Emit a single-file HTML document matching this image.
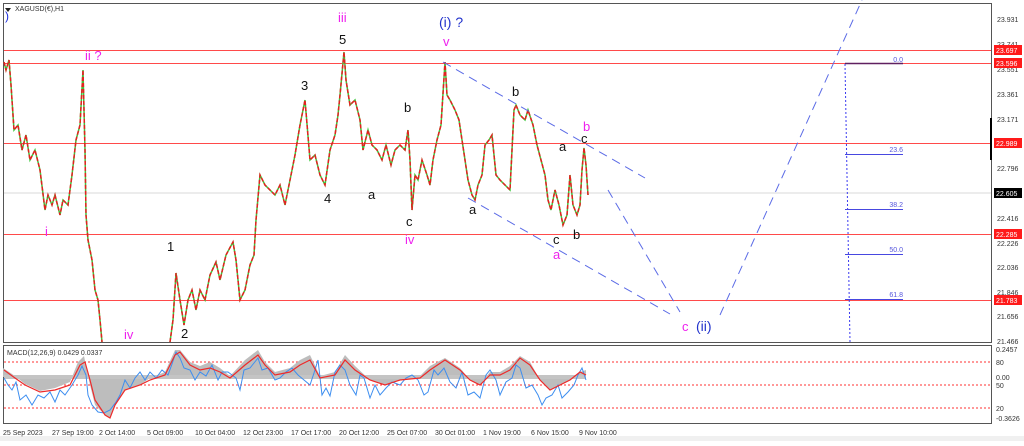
<!DOCTYPE html>
<html><head><meta charset="utf-8"><style>
html,body{margin:0;padding:0;background:#fff;}
body{width:1024px;height:441px;overflow:hidden;font-family:"Liberation Sans",sans-serif;}
</style></head><body>
<svg width="1024" height="441" viewBox="0 0 1024 441" xmlns="http://www.w3.org/2000/svg" font-family="Liberation Sans, sans-serif">
<rect x="0" y="0" width="1024" height="441" fill="#fff"/>
<rect x="0" y="436" width="1024" height="5" fill="#f0f0f0"/>
<rect x="3.5" y="3.5" width="988" height="339" fill="#fff" stroke="#555" stroke-width="1"/>
<rect x="3.5" y="345.5" width="988" height="78" fill="#fff" stroke="#555" stroke-width="1"/>
<path d="M5 8 L11 8 L8 12 Z" fill="#222"/>
<text x="15" y="11" font-size="7" fill="#333">XAGUSD(€),H1</text>
<text x="5" y="20" font-size="12" fill="#1a2bdc">)</text>
<line x1="4" y1="193" x2="991" y2="193" stroke="#d8d8d8" stroke-width="1"/>
<g stroke="#ff4a4a" stroke-width="1">
<line x1="4" y1="50.5" x2="991" y2="50.5"/>
<line x1="4" y1="63.5" x2="991" y2="63.5"/>
<line x1="4" y1="143.5" x2="991" y2="143.5"/>
<line x1="4" y1="234.5" x2="991" y2="234.5"/>
<line x1="4" y1="300.5" x2="991" y2="300.5"/>
</g>
<g id="px" fill="none" stroke-width="1.5">
<polyline stroke="#3cc83c" points="4,62 6,70 9,60 11,85 14,130 18,125 22,150 26,135 30,160 35,150 40,170 45,210 48,195 52,205 55,195 60,215 63,200 68,205 72,175 76,140 80,125 83,70 85,150 86,215 88,240 92,260 95,290 98,300 100,320 102,342"/>
<polyline stroke="#3cc83c" points="170,342 173,320 176,273 180,300 184,325 188,300 192,290 196,310 200,290 205,300 210,275 216,262 220,280 226,255 233,242 236,260 240,300 245,290 250,265 254,255 256,220 260,175 265,185 270,190 275,195 280,185 285,205 290,180 295,155 300,125 305,100 310,160 315,155 320,175 325,185 330,150 335,135 338,115 340,95 344,52 346,80 350,105 355,100 360,120 363,150 368,130 372,145 377,150 382,160 386,145 391,165 395,150 400,145 405,150 408,130 410,160 412,210 415,175 418,180 422,160 427,175 430,185 433,160 437,140 441,125 445,62 447,95 450,100 455,110 459,120 462,140 465,160 468,180 472,195 475,200 478,185 482,175 485,145 489,140 492,135 496,175 500,180 505,185 510,190 514,110 516,105 520,115 525,120 528,110 533,125 537,145 541,160 545,175 548,200 551,210 555,190 559,205 563,225 567,215 570,175 573,205 577,215 580,205 582,170 584,148 586,165 588,195"/>
</g>
<g fill="none" stroke="#e52020" stroke-width="1.5" stroke-dasharray="4,2">
<polyline points="4,62 6,70 9,60 11,85 14,130 18,125 22,150 26,135 30,160 35,150 40,170 45,210 48,195 52,205 55,195 60,215 63,200 68,205 72,175 76,140 80,125 83,70 85,150 86,215 88,240 92,260 95,290 98,300 100,320 102,342"/>
<polyline points="170,342 173,320 176,273 180,300 184,325 188,300 192,290 196,310 200,290 205,300 210,275 216,262 220,280 226,255 233,242 236,260 240,300 245,290 250,265 254,255 256,220 260,175 265,185 270,190 275,195 280,185 285,205 290,180 295,155 300,125 305,100 310,160 315,155 320,175 325,185 330,150 335,135 338,115 340,95 344,52 346,80 350,105 355,100 360,120 363,150 368,130 372,145 377,150 382,160 386,145 391,165 395,150 400,145 405,150 408,130 410,160 412,210 415,175 418,180 422,160 427,175 430,185 433,160 437,140 441,125 445,62 447,95 450,100 455,110 459,120 462,140 465,160 468,180 472,195 475,200 478,185 482,175 485,145 489,140 492,135 496,175 500,180 505,185 510,190 514,110 516,105 520,115 525,120 528,110 533,125 537,145 541,160 545,175 548,200 551,210 555,190 559,205 563,225 567,215 570,175 573,205 577,215 580,205 582,170 584,148 586,165 588,195"/>
</g>
<g stroke="#5b6be6" stroke-width="1" stroke-dasharray="9,6" fill="none">
<line x1="443" y1="62" x2="645" y2="178"/>
<line x1="468" y1="198" x2="670" y2="314"/>
<line x1="608" y1="190" x2="680" y2="312"/>
<line x1="720" y1="315" x2="862" y2="0"/>
</g>
<line x1="845" y1="64" x2="850" y2="342" stroke="#3a3af0" stroke-width="1" stroke-dasharray="2,2"/>
<line x1="845" y1="63.5" x2="903" y2="63.5" stroke="#602060" stroke-width="1.5"/>
<g stroke="#4848e0" stroke-width="1">
<line x1="845" y1="154.5" x2="903" y2="154.5"/>
<line x1="845" y1="209.5" x2="903" y2="209.5"/>
<line x1="845" y1="254.5" x2="903" y2="254.5"/>
<line x1="845" y1="299.5" x2="903" y2="299.5"/>
</g>
<g font-size="7" fill="#5555dd" text-anchor="end">
<text x="903" y="62">0.0</text>
<text x="903" y="152">23.6</text>
<text x="903" y="207">38.2</text>
<text x="903" y="252">50.0</text>
<text x="903" y="297">61.8</text>
</g>
<g font-size="13" fill="#ee22ee">
<text x="338" y="22">iii</text>
<text x="443" y="46">v</text>
<text x="85" y="60">ii ?</text>
<text x="583" y="131">b</text>
<text x="45" y="236">i</text>
<text x="405" y="244">iv</text>
<text x="553" y="259">a</text>
<text x="124" y="339">iv</text>
<text x="682" y="331">c</text>
</g>
<g font-size="14" fill="#2233cc">
<text x="439" y="27">(i) ?</text>
<text x="696" y="331">(ii)</text>
</g>
<g font-size="13" fill="#111">
<text x="339" y="44">5</text>
<text x="301" y="90">3</text>
<text x="404" y="112">b</text>
<text x="512" y="96">b</text>
<text x="581" y="143">c</text>
<text x="559" y="151">a</text>
<text x="368" y="199">a</text>
<text x="324" y="203">4</text>
<text x="469" y="214">a</text>
<text x="406" y="226">c</text>
<text x="553" y="244">c</text>
<text x="573" y="239">b</text>
<text x="167" y="251">1</text>
<text x="181" y="338">2</text>
</g>
<rect x="990" y="118" width="2" height="42" fill="#000"/>
<g font-size="7" fill="#333">
<text x="997" y="22">23.931</text>
<text x="997" y="47">23.741</text>
<text x="997" y="72">23.551</text>
<text x="997" y="97">23.361</text>
<text x="997" y="122">23.171</text>
<text x="997" y="171">22.796</text>
<text x="997" y="221">22.416</text>
<text x="997" y="246">22.226</text>
<text x="997" y="270">22.036</text>
<text x="997" y="295">21.846</text>
<text x="997" y="319">21.656</text>
<text x="997" y="344">21.466</text>
</g>
<g>
<rect x="994" y="45" width="28" height="10" fill="#ff1a1a"/>
<rect x="994" y="58" width="28" height="10" fill="#ff1a1a"/>
<rect x="994" y="138" width="28" height="10" fill="#ff1a1a"/>
<rect x="994" y="188" width="28" height="10" fill="#000"/>
<rect x="994" y="229" width="28" height="10" fill="#ff1a1a"/>
<rect x="994" y="295" width="28" height="10" fill="#ff1a1a"/>
</g>
<g font-size="7" fill="#fff">
<text x="996" y="53">23.697</text>
<text x="996" y="66">23.596</text>
<text x="996" y="146">22.989</text>
<text x="996" y="196">22.605</text>
<text x="996" y="237">22.285</text>
<text x="996" y="303">21.783</text>
</g>
<g stroke="#ff3030" stroke-width="1" stroke-dasharray="2,2">
<line x1="4" y1="362" x2="991" y2="362"/>
<line x1="4" y1="385" x2="991" y2="385"/>
<line x1="4" y1="408" x2="991" y2="408"/>
</g>
<polygon fill="#bdbdbd" points="3,377 3,368 15,376 25,384 40,391 55,388 70,382 78,362 84,356 90,385 95,405 105,415 110,418 115,405 125,390 140,385 150,378 165,372 175,350 180,350 190,362 200,366 210,362 220,368 230,376 245,360 258,350 265,362 275,372 290,368 300,360 310,355 320,376 335,372 345,355 355,366 370,380 385,385 400,380 420,376 430,366 445,358 460,368 470,380 480,385 490,372 500,372 510,366 520,356 530,362 540,380 550,390 560,385 570,380 580,372 586,370 586,377"/>
<rect x="4" y="375" width="582" height="4" fill="#c4c4c4"/>
<polyline fill="none" stroke="#3d8ef0" stroke-width="1" points="4,378 8,385 12,390 16,382 20,400 26,395 32,405 38,395 44,398 50,392 55,402 60,390 65,395 72,385 78,375 82,366 86,375 88,395 92,405 98,412 104,413 110,410 116,402 120,395 125,380 130,388 135,378 140,372 145,380 150,372 156,378 162,370 168,375 172,364 176,352 180,358 184,368 190,370 195,380 200,372 206,376 212,365 218,380 222,372 228,372 236,378 240,390 244,370 250,368 258,358 262,370 268,368 275,380 280,378 286,372 292,368 298,375 304,380 310,385 314,373 318,360 322,395 326,388 330,396 335,372 340,365 345,370 350,385 356,395 360,375 364,378 370,398 375,385 380,395 386,388 392,382 400,385 406,378 412,375 418,380 424,395 428,392 434,370 438,375 444,368 450,382 456,388 462,372 468,395 474,392 480,398 486,375 490,370 496,380 500,395 506,382 512,378 516,365 520,368 526,388 532,385 538,395 542,405 546,398 552,395 558,385 562,398 568,392 574,385 578,375 582,368 586,380"/>
<polyline fill="none" stroke="#ee2a2a" stroke-width="1.2" points="4,370 15,378 25,385 40,392 55,390 70,385 80,365 85,362 90,380 95,400 105,415 110,418 115,405 125,390 140,385 150,380 165,375 175,355 180,352 190,365 200,370 210,368 220,372 230,378 245,365 258,355 265,365 275,375 290,372 300,365 310,360 320,378 335,375 345,360 355,370 370,380 385,385 400,380 420,378 430,370 445,360 460,370 470,380 480,385 490,375 500,375 510,370 520,358 530,365 540,380 550,390 560,385 570,380 580,372 586,375"/>
<text x="7" y="355" font-size="7" fill="#333">MACD(12,26,9) 0.0429 0.0337</text>
<g font-size="7" fill="#333">
<text x="996" y="352">0.2457</text>
<text x="996" y="365">80</text>
<text x="996" y="380">0.00</text>
<text x="996" y="388">50</text>
<text x="996" y="411">20</text>
<text x="996" y="421">-0.3626</text>
</g>
<g font-size="7" fill="#333">
<text x="3" y="435">25 Sep 2023</text>
<text x="52" y="435">27 Sep 19:00</text>
<text x="99" y="435">2 Oct 14:00</text>
<text x="147" y="435">5 Oct 09:00</text>
<text x="195" y="435">10 Oct 04:00</text>
<text x="243" y="435">12 Oct 23:00</text>
<text x="291" y="435">17 Oct 17:00</text>
<text x="339" y="435">20 Oct 12:00</text>
<text x="387" y="435">25 Oct 07:00</text>
<text x="435" y="435">30 Oct 01:00</text>
<text x="483" y="435">1 Nov 19:00</text>
<text x="531" y="435">6 Nov 15:00</text>
<text x="579" y="435">9 Nov 10:00</text>
</g>
</svg>
</body></html>
